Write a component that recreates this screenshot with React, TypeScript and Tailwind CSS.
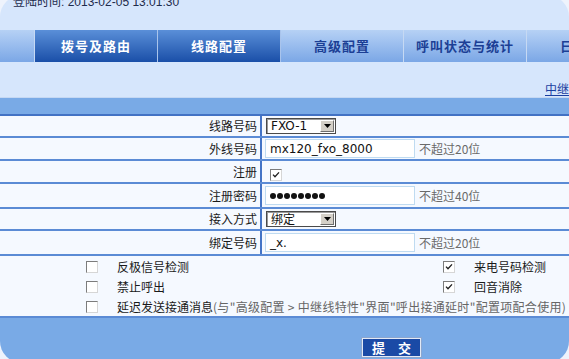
import React from "react";

function Box({ checked }: { checked?: boolean }) {
  return (
    <span className="inline-flex w-[12px] h-[12px] shrink-0 items-center justify-center bg-white border border-t-[#7c7c7c] border-l-[#7c7c7c] border-r-[#d6d6d6] border-b-[#d6d6d6]">
      {checked && (
        <svg width="8" height="8" viewBox="0 0 8 8">
          <path d="M1 3.6 L3 5.8 L7 1.4" stroke="#1e1e1e" strokeWidth="1.3" fill="none" />
        </svg>
      )}
    </span>
  );
}

function Sel({ text, latin }: { text: string; latin?: boolean }) {
  return (
    <div className="flex w-[70px] h-[16px] bg-white border border-[#4a4a4a] shadow-[inset_1px_1px_0_#9a9a9a]">
      <div
        className={
          latin
            ? "flex-1 flex items-center pl-[4px] text-[12px] leading-none text-[#111] font-['DejaVu_Sans',sans-serif]"
            : "flex-1 flex items-center pl-[4px] text-[12px] leading-none text-[#111]"
        }
      >
        {text}
      </div>
      <div className="w-[14px] h-[12px] mt-[1px] mr-[1px] flex items-center justify-center bg-[#d4d0c8] border border-t-white border-l-white border-r-[#6e6e6e] border-b-[#6e6e6e]">
        <svg width="7" height="4" viewBox="0 0 7 4">
          <path d="M0 0 H7 L3.5 4 Z" fill="#000" />
        </svg>
      </div>
    </div>
  );
}

function TextBox({ children, latin }: { children?: React.ReactNode; latin?: boolean }) {
  return (
    <div
      className={
        latin
          ? "w-[150px] h-[19px] bg-white border border-[#bfdbf1] flex items-center pl-[4px] text-[12px] leading-none text-[#111] font-['DejaVu_Sans',sans-serif]"
          : "w-[150px] h-[19px] bg-white border border-[#bfdbf1] flex items-center pl-[4px]"
      }
    >
      {children}
    </div>
  );
}

function Hint({ children }: { children: React.ReactNode }) {
  return <span className="ml-[4px] text-[12px] leading-none text-[#6a6a6a] whitespace-nowrap">{children}</span>;
}

function Row({ h, label, children }: { h: string; label: string; children: React.ReactNode }) {
  return (
    <div className={"flex shrink-0 border-b-2 border-[#5b8bd5] bg-[#f5f9ff] " + h}>
      <div className="w-[262px] shrink-0 border-r-2 border-[#4474c6] flex items-center justify-end pr-[3px] text-[12px] text-[#1a1a1a] whitespace-nowrap">
        {label}
      </div>
      <div className="flex items-center pl-[3px]">{children}</div>
    </div>
  );
}

const darkTab =
  "w-[123px] shrink-0 h-full flex items-center justify-center border-r border-[#a9c4ec] text-[13px] font-bold tracking-[1px] whitespace-nowrap bg-linear-to-b from-[#5a8fd8] to-[#1a4fa8] text-white";
const lightTab =
  "w-[123px] shrink-0 h-full flex items-center justify-center border-r border-[#c6d9f3] text-[13px] font-bold tracking-[1px] whitespace-nowrap bg-linear-to-b from-[#b6d1f5] to-[#7ba7e6] text-[#1c3f95]";

export default function App() {
  return (
    <div className="w-[569px] h-[359px] overflow-hidden bg-[#eef3fc] font-['Noto_Sans_CJK_SC',sans-serif]">
      <div className="-mt-[5px] h-[368px] rounded-[22px] bg-[#d6e6fc] overflow-hidden flex flex-col">
        <div className="h-[35px] shrink-0 pl-[13px] text-[12px] leading-[14px] text-[#1e2c4c] whitespace-nowrap font-['Liberation_Sans','Noto_Sans_CJK_SC',sans-serif]">
          登陆时间: 2013-02-05 13:01:30
        </div>
        <nav className="h-[32px] shrink-0 flex -ml-[88px]">
          <div className={lightTab}>基本配置</div>
          <div className={darkTab}>拨号及路由</div>
          <div className={darkTab}>线路配置</div>
          <div className={lightTab}>高级配置</div>
          <div className={lightTab}>呼叫状态与统计</div>
          <div className={lightTab}>日志管理</div>
        </nav>
        <div className="h-[35px] shrink-0 pt-[20px] pl-[545px] whitespace-nowrap text-[12px] leading-[14px]">
          <span className="underline text-[#1b3fa0]">中继线特性</span>
        </div>
        <div className="h-[19px] shrink-0 border-t border-[#c5d8f3] bg-[#79aae6] border-b-2 border-b-[#4272c4]" />

        <Row h="h-[22px]" label="线路号码">
          <div className="ml-[1px]">
            <Sel text="FXO-1" latin />
          </div>
        </Row>
        <Row h="h-[23px]" label="外线号码">
          <TextBox latin>mx120_fxo_8000</TextBox>
          <Hint>不超过20位</Hint>
        </Row>
        <Row h="h-[23px]" label="注册">
          <div className="ml-[5px]">
            <Box checked />
          </div>
        </Row>
        <Row h="h-[25px]" label="注册密码">
          <TextBox>
            <div className="flex gap-[1px]">
              {Array.from({ length: 8 }).map((_, i) => (
                <span key={i} className="w-[6px] h-[6px] rounded-full bg-[#111]" />
              ))}
            </div>
          </TextBox>
          <Hint>不超过40位</Hint>
        </Row>
        <Row h="h-[22px]" label="接入方式">
          <div className="ml-[1px]">
            <Sel text="绑定" />
          </div>
        </Row>
        <Row h="h-[25px]" label="绑定号码">
          <TextBox latin>_x.</TextBox>
          <Hint>不超过20位</Hint>
        </Row>

        <div className="h-[62px] shrink-0 border-b-2 border-[#5b8bd5] bg-[#f5f9ff] pt-[1px] text-[12px] leading-none text-[#1a1a1a] whitespace-nowrap">
          <div className="h-[20px] flex items-center">
            <div className="w-[443px] shrink-0 flex items-center pl-[86px]">
              <Box />
              <span className="ml-[19px]">反极信号检测</span>
            </div>
            <div className="flex items-center">
              <Box checked />
              <span className="ml-[19px]">来电号码检测</span>
            </div>
          </div>
          <div className="h-[20px] flex items-center">
            <div className="w-[443px] shrink-0 flex items-center pl-[86px]">
              <Box />
              <span className="ml-[19px]">禁止呼出</span>
            </div>
            <div className="flex items-center">
              <Box checked />
              <span className="ml-[19px]">回音消除</span>
            </div>
          </div>
          <div className="h-[20px] flex items-center pl-[86px]">
            <Box />
            <span className="ml-[19px]">
              延迟发送接通消息
              <span className="text-[#666] tracking-[0.3px]">(与"高级配置 &gt; 中继线特性"界面"呼出接通延时"配置项配合使用)</span>
            </span>
          </div>
        </div>

        <div className="flex-1 bg-[#79aae6] pt-[20px] pl-[362px]">
          <button className="w-[59px] h-[19px] flex items-center justify-center bg-[#1a4aa6] border border-[#e2e9f5] shadow-[0_0_0_1px_#8aa6d0] text-white font-bold text-[13px] leading-none whitespace-nowrap">
            提　交
          </button>
        </div>
      </div>
    </div>
  );
}
